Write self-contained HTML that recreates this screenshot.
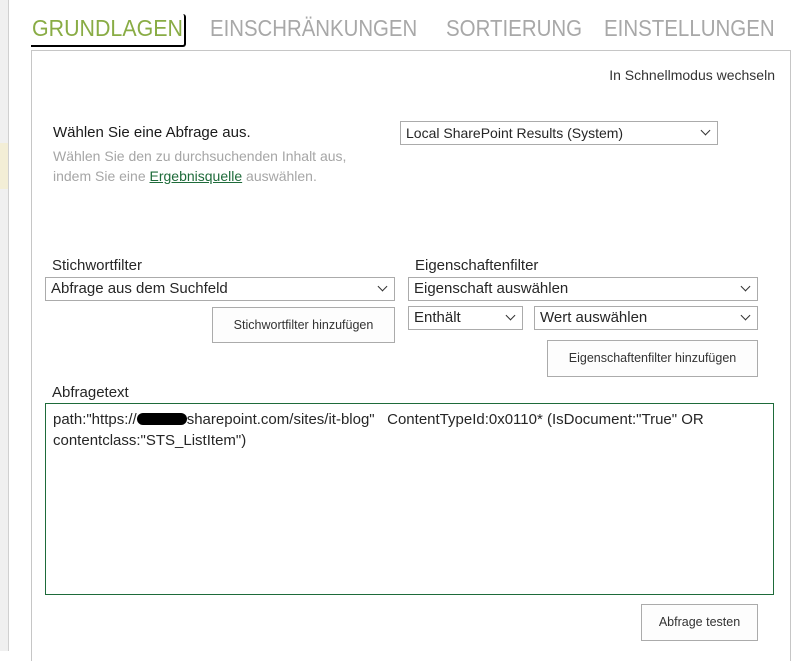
<!DOCTYPE html>
<html><head><style>
body{margin:0;width:795px;height:651px;overflow:hidden;background:#fff;font-family:"Segoe UI","Liberation Sans",sans-serif;position:relative;color:#262626}
.a{position:absolute;white-space:nowrap}
.sel{position:absolute;border:1px solid #ababab;background:#fff;font-size:14px;color:#262626;box-sizing:border-box;padding:2px 5px;height:24px;line-height:18px}
.sel:after{content:"";position:absolute;right:8px;top:5px;width:6px;height:6px;border-right:1.5px solid #333;border-bottom:1.5px solid #333;transform:rotate(45deg)}
.btn{position:absolute;border:1px solid #ababab;background:#fdfdfd;font-size:12.5px;text-align:center;box-sizing:border-box;color:#333}
.tab{position:absolute;top:15px;font-size:23px;color:#a8a8a8;transform-origin:0 0;white-space:nowrap}
</style></head><body>
<div class="a" style="left:0;top:0;width:8px;height:651px;background:#f0f0f0;border-right:1px solid #d0d0d0"></div>
<div class="a" style="left:0;top:143px;width:8px;height:46px;background:#f3eed6"></div>
<div class="a" style="left:31px;top:50px;width:758px;height:610px;border:1px solid #c6c6c6;border-bottom:none"></div>
<div class="a" style="left:31px;top:14px;width:153px;height:31px;border-right:2px solid #000;border-bottom:2px solid #000;border-radius:0 3px 3px 0;background:#fff"></div>
<div class="tab" style="left:32px;color:#89ac45;transform:scaleX(0.93)">GRUNDLAGEN</div>
<div class="tab" style="left:210px;transform:scaleX(0.886)">EINSCHRÄNKUNGEN</div>
<div class="tab" style="left:446px;transform:scaleX(0.89)">SORTIERUNG</div>
<div class="tab" style="left:604px;transform:scaleX(0.89)">EINSTELLUNGEN</div>
<div class="a" style="right:20px;top:67px;font-size:14px;color:#333">In Schnellmodus wechseln</div>
<div class="a" style="left:53px;top:124px;font-size:15px;color:#1a1a1a">Wählen Sie eine Abfrage aus.</div>
<div class="a" style="left:53px;top:146px;font-size:14px;color:#a6a6a6;line-height:20px">Wählen Sie den zu durchsuchenden Inhalt aus,<br>indem Sie eine <span style="color:#1e6b3a;text-decoration:underline">Ergebnisquelle</span> auswählen.</div>
<div class="sel" style="left:400px;top:121px;width:318px">Local SharePoint Results (System)</div>
<div class="a" style="left:52px;top:257px;font-size:15px">Stichwortfilter</div>
<div class="a" style="left:415px;top:257px;font-size:15px">Eigenschaftenfilter</div>
<div class="sel" style="left:45px;top:277px;width:350px;font-size:15px">Abfrage aus dem Suchfeld</div>
<div class="sel" style="left:408px;top:277px;width:350px;font-size:15px">Eigenschaft auswählen</div>
<div class="sel" style="left:408px;top:306px;width:115px;font-size:15px">Enthält</div>
<div class="sel" style="left:534px;top:306px;width:224px;font-size:15px">Wert auswählen</div>
<div class="btn" style="left:212px;top:307px;width:183px;height:36px;line-height:34px">Stichwortfilter hinzufügen</div>
<div class="btn" style="left:547px;top:340px;width:211px;height:37px;line-height:35px">Eigenschaftenfilter hinzufügen</div>
<div class="a" style="left:52px;top:384px;font-size:15px">Abfragetext</div>
<div class="a" style="left:45px;top:403px;width:729px;height:192px;border:1px solid #1e6b3a;box-sizing:border-box;padding:5px 7px;font-size:15px;line-height:21px;white-space:normal;color:#262626">path:"https://<span style="display:inline-block;width:50px;height:12px;background:#000;border-radius:6px;vertical-align:-1px"></span>sharepoint.com/sites/it-blog"&nbsp;&nbsp; ContentTypeId:0x0110* (IsDocument:"True" OR contentclass:"STS_ListItem")</div>
<div class="btn" style="left:641px;top:604px;width:117px;height:37px;line-height:35px">Abfrage testen</div>
</body></html>
